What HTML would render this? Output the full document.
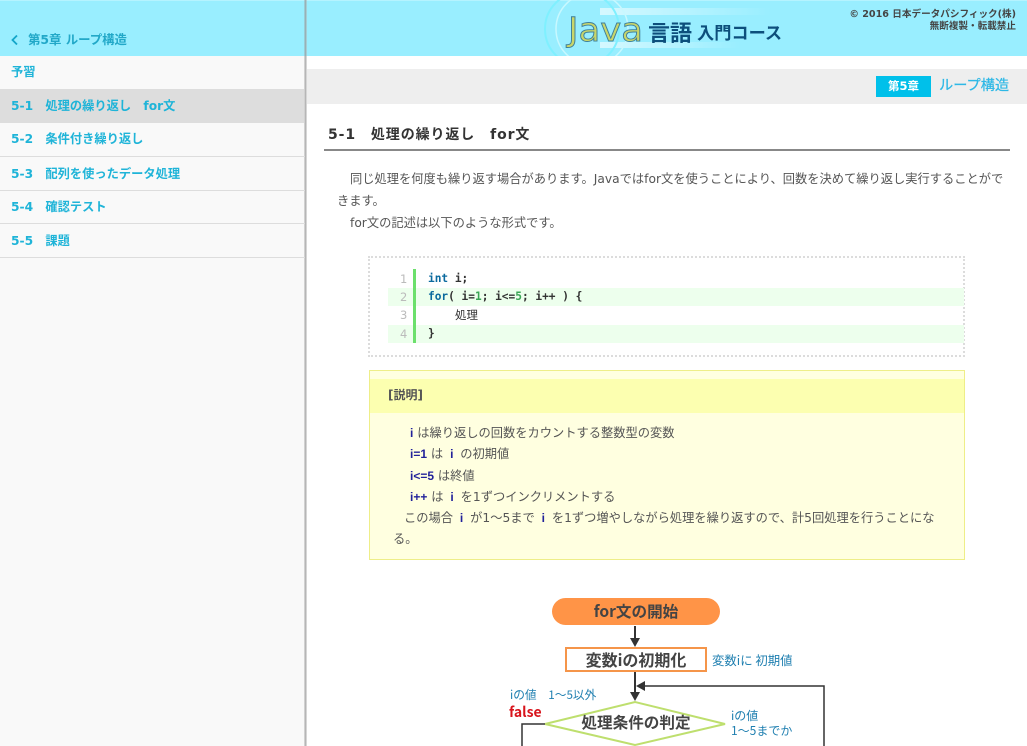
<!DOCTYPE html>
<html lang="ja"><head><meta charset="utf-8"><title>Java言語入門コース</title>
<style>
html,body{margin:0;padding:0;width:1027px;height:746px;overflow:hidden;background:#fff}
body{position:relative;font-family:"DejaVu Sans","Noto Sans CJK JP",sans-serif;color:#444}
.a{position:absolute;white-space:nowrap}
.s{font-size:12.25px;font-weight:bold;color:#1fb4d8;left:11px;line-height:16px}
.l{position:absolute;left:0;width:305px;height:1px;background:#ddd}
.t{font-size:12.25px;line-height:16px;color:#555}
.c{font-family:"DejaVu Sans Mono","Noto Sans CJK JP",monospace;font-size:11.15px;line-height:16px;font-weight:bold;color:#333}
.n{font-size:11.5px;color:#bbb;line-height:16px;font-family:"DejaVu Sans",sans-serif}
b.v{color:#22229a;font-family:"Liberation Sans",sans-serif;font-size:12px}
b.m{margin:0 3px}
.kw{color:#0b6a9e}.g{color:#3aa655}
</style></head><body>
<div class="a" style="left:0;top:0;width:1027px;height:56px;background:#99eeff;border-top:1px solid #b5f3ff;box-sizing:border-box"></div>
<svg class="a" style="left:530px;top:0" width="270" height="56" viewBox="0 0 270 56">
<defs><linearGradient id="g" x1="0" x2="1"><stop offset="0" stop-color="#e4fbff"/><stop offset="1" stop-color="#99eeff"/></linearGradient></defs>
<rect x="70" y="8" width="170" height="7" fill="url(#g)" opacity=".8"/><rect x="70" y="42" width="140" height="6" fill="url(#g)" opacity=".8"/>
<circle cx="52" cy="29" r="37" fill="none" stroke="#7ff0ff" stroke-width="2"/><circle cx="62" cy="29" r="36" fill="none" stroke="#c8f8ff" stroke-width="1.5"/>
<text x="38" y="41" font-family="DejaVu Sans,sans-serif" font-size="33" textLength="75" lengthAdjust="spacingAndGlyphs" fill="#c8d56a" stroke="#3f7f98" stroke-width=".9">Java</text>
<text x="118" y="41" font-family="Noto Sans CJK JP,sans-serif" font-weight="bold" font-size="22" fill="#0d4f7c">言語</text>
<text x="167" y="39" font-family="Noto Sans CJK JP,sans-serif" font-weight="bold" font-size="17.2" fill="#0d4f7c">入門コース</text></svg>
<div class="a" style="right:11px;top:9px;font-size:9.6px;line-height:12px;text-align:right;color:#444;font-weight:bold">© 2016 日本データパシフィック(株)<br>無断複製・転載禁止</div>

<div class="a" style="left:307px;top:69px;width:720px;height:35px;background:#eee"></div>
<div class="a" style="left:876px;top:76px;width:55px;height:21px;background:#00c0ea;color:#fff;font-size:11.5px;font-weight:bold;line-height:21px;text-align:center">第5章</div>
<div class="a" style="left:939px;top:76px;font-size:14.2px;line-height:20px;color:#2eb8e6;-webkit-text-stroke:.25px #2eb8e6">ループ構造</div>

<div class="a" style="left:328px;top:126px;font-size:14px;line-height:18px;font-weight:bold;color:#333;letter-spacing:.9px">5-1　処理の繰り返し　for文</div>
<div class="a" style="left:324px;top:149px;width:686px;height:2px;background:#888"></div>
<div class="a t" style="left:350px;top:171px">同じ処理を何度も繰り返す場合があります。Javaではfor文を使うことにより、回数を決めて繰り返し実行することがで</div>
<div class="a t" style="left:337px;top:193px">きます。</div>
<div class="a t" style="left:350px;top:215px">for文の記述は以下のような形式です。</div>

<div class="a" style="left:368px;top:256px;width:597px;height:101px;border:2px dotted #dcdcdc;box-sizing:border-box"></div>
<div class="a" style="left:388px;top:288px;width:576px;height:18px;background:#edffed"></div>
<div class="a" style="left:388px;top:325px;width:576px;height:18px;background:#edffed"></div>
<div class="a" style="left:413px;top:269px;width:3px;height:74px;background:#6ce06c"></div>
<div class="a n" style="left:400px;top:271px">1</div><div class="a n" style="left:400px;top:289px">2</div><div class="a n" style="left:400px;top:307px">3</div><div class="a n" style="left:400px;top:326px">4</div>
<div class="a c" style="left:428px;top:271px"><span class="kw">int</span> i;</div>
<div class="a c" style="left:428px;top:289px"><span class="kw">for</span>( i=<span class="g">1</span>; i&lt;=<span class="g">5</span>; i++ ) {</div>
<div class="a" style="left:455px;top:307px;font-size:11.5px;line-height:16px;color:#333">処理</div>
<div class="a c" style="left:428px;top:326px">}</div>

<div class="a" style="left:369px;top:370px;width:596px;height:190px;background:#ffffe0;border:1px solid #eeee88;box-sizing:border-box"></div>
<div class="a" style="left:370px;top:379px;width:594px;height:34px;background:#fcffb0"></div>
<div class="a" style="left:388px;top:387px;font-size:12px;line-height:16px;font-weight:bold;color:#555">[説明]</div>
<div class="a t" style="left:410px;top:425px"><b class="v">i</b> は繰り返しの回数をカウントする整数型の変数</div>
<div class="a t" style="left:410px;top:446px"><b class="v">i=1</b> は <b class="v m">i</b> の初期値</div>
<div class="a t" style="left:410px;top:468px"><b class="v">i&lt;=5</b> は終値</div>
<div class="a t" style="left:410px;top:489px"><b class="v">i++</b> は <b class="v m">i</b> を1ずつインクリメントする</div>
<div class="a t" style="left:404px;top:510px">この場合 <b class="v m">i</b> が1～5まで <b class="v m">i</b> を1ずつ増やしながら処理を繰り返すので、計5回処理を行うことにな</div>
<div class="a t" style="left:393px;top:531px">る。</div>

<svg class="a" style="left:500px;top:590px" width="340" height="156" viewBox="0 0 340 156" font-family="Noto Sans CJK JP,sans-serif">
<rect x="52" y="8" width="168" height="27" rx="13.5" fill="#ff9447"/>
<text x="136" y="27" text-anchor="middle" font-size="15.600" font-weight="bold" fill="#444">for文の開始</text>
<path d="M135 36V50" stroke="#333" stroke-width="2" fill="none"/><path d="M130 48h10l-5 9z" fill="#333"/>
<rect x="66" y="58" width="140" height="23" fill="#fff" stroke="#f5954a" stroke-width="2"/>
<text x="136" y="76" text-anchor="middle" font-size="16" font-weight="bold" fill="#444">変数iの初期化</text>
<text x="212" y="75" font-size="12.4" fill="#1f7fb0">変数iに 初期値</text>
<path d="M135 82V104" stroke="#333" stroke-width="2" fill="none"/><path d="M130 102h10l-5 9z" fill="#333"/>
<path d="M144 96H324V156" stroke="#333" stroke-width="1.5" fill="none"/><path d="M145 91v10l-9-5z" fill="#333"/>
<text x="10" y="109" font-size="11.7" fill="#1f7fb0">iの値　1～5以外</text>
<text x="9" y="127" font-size="14" font-weight="bold" fill="#d8141c">false</text>
<path d="M45 134L135 112L225 134L135 155Z" fill="#fff" stroke="#bedf6e" stroke-width="2"/>
<text x="136" y="138" text-anchor="middle" font-size="15.600" font-weight="bold" fill="#444">処理条件の判定</text>
<path d="M45 134H22V156" stroke="#333" stroke-width="1.5" fill="none"/>
<text x="231" y="130" font-size="12" fill="#1f7fb0">iの値</text><text x="231" y="145" font-size="12" fill="#1f7fb0">1～5までか</text>
</svg>

<div class="a" style="left:0;top:56px;width:305px;height:690px;background:#f9f9f9"></div>
<div class="a" style="left:304px;top:0;width:3px;height:746px;background:linear-gradient(90deg,rgba(170,170,170,.25),rgba(150,150,150,.8) 50%,rgba(200,200,200,.35))"></div>
<div class="a" style="left:0;top:89px;width:304px;height:34px;background:#ddd"></div>
<div class="l" style="top:156px"></div><div class="l" style="top:190px"></div><div class="l" style="top:223px"></div><div class="l" style="top:257px"></div>
<svg class="a" style="left:10px;top:34px" width="10" height="12" viewBox="0 0 10 12"><path d="M7 1.500L2.500 6L7 10.500" fill="none" stroke="#14a5c9" stroke-width="1.800"/></svg>
<div class="a" style="left:28px;top:32px;font-size:12.4px;line-height:16px;font-weight:bold;color:#22a8c8">第5章 ループ構造</div>
<div class="a s" style="top:64px">予習</div>
<div class="a s" style="top:98px">5-1　処理の繰り返し　for文</div>
<div class="a s" style="top:131px">5-2　条件付き繰り返し</div>
<div class="a s" style="top:166px">5-3　配列を使ったデータ処理</div>
<div class="a s" style="top:199px">5-4　確認テスト</div>
<div class="a s" style="top:233px">5-5　課題</div>
</body></html>
